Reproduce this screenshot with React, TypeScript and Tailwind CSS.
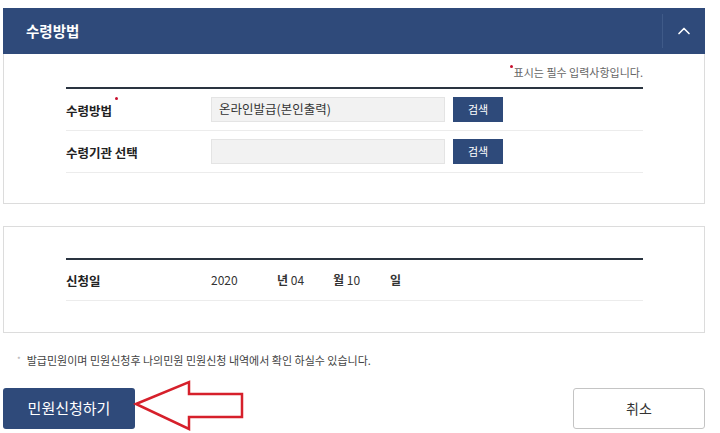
import { ChevronUp } from "lucide-react";

const font = { fontFamily: '"Malgun Gothic", "Noto Sans CJK KR", "Noto Sans", sans-serif' };

function RequiredDot() {
  return <span className="absolute -right-[6px] -top-[4px] h-[3px] w-[3px] rounded-full bg-[#c8102e]" />;
}

function FieldRow({ label, value, required }: { label: string; value?: string; required?: boolean }) {
  return (
    <div className="flex h-[42px] items-center border-b border-[#ececec]">
      <div className="w-[145px] pt-[3px] text-[12.5px] font-bold text-[#222]">
        <span className="relative">
          {label}
          {required && <RequiredDot />}
        </span>
      </div>
      <div className="flex h-[25px] w-[234px] items-center border border-[#e4e4e4] bg-[#f2f2f2] px-[7px] text-[12.5px] text-[#333]">
        {value}
      </div>
      <button className="ml-[8px] h-[25px] w-[50px] bg-[#2e4a7a] text-[11px] text-white">검색</button>
    </div>
  );
}

export default function App() {
  return (
    <div style={font} className="relative h-[433px] w-[720px] overflow-hidden bg-white pl-[3px] pr-[15px] pt-[8px]">
      {/* 수령방법 패널 */}
      <div className="flex h-[46px] items-center bg-[#2f4a7a] pl-[23px]">
        <span className="flex-1 text-[14.5px] font-bold text-white">수령방법</span>
        <div className="h-[34px] w-px bg-[#3f5a88]" />
        <div className="flex w-[42px] items-center justify-center text-white">
          <ChevronUp size={20} strokeWidth={2} />
        </div>
      </div>
      <div className="h-[150px] border-x border-b border-[#dcdcdc] pl-[62px] pr-[61px] pt-[8px]">
        <div className="flex h-[20px] items-center justify-end text-[11px] text-[#666]">
          <span className="relative">
            <span className="absolute -left-[4px] top-[1px] h-[3px] w-[3px] rounded-full bg-[#c8102e]" />
            표시는 필수 입력사항입니다.
          </span>
        </div>
        <div className="mt-[5px] border-t-2 border-[#2a3440]">
          <FieldRow label="수령방법" value="온라인발급(본인출력)" required />
          <FieldRow label="수령기관 선택" />
        </div>
      </div>

      {/* 신청일 패널 */}
      <div className="mt-[22px] h-[107px] border border-[#dcdcdc] pl-[62px] pr-[61px] pt-[31px]">
        <div className="border-t-2 border-[#2a3440]">
          <div className="flex h-[41px] items-center border-b border-[#ececec] text-[12px] text-[#333]">
            <div className="w-[145px] pt-[3px] text-[12.5px] font-bold text-[#222]">신청일</div>
            <span className="w-[66px]">2020</span>
            <span className="w-[56px]">
              <b className="font-bold">년</b> 04
            </span>
            <span className="w-[57px]">
              <b className="font-bold">월</b> 10
            </span>
            <b className="font-bold">일</b>
          </div>
        </div>
      </div>

      <p className="mt-[19px] flex items-center pl-[14px] text-[11px] text-[#444]">
        <span className="mr-[6px] text-[8px] text-[#aaa]">*</span>
        발급민원이며 민원신청후 나의민원 민원신청 내역에서 확인 하실수 있습니다.
      </p>

      <div className="mt-[19px] flex justify-between">
        <button className="h-[41px] w-[132px] rounded-[3px] bg-[#2f4a7a] text-[15px] text-white">민원신청하기</button>
        <button className="h-[41px] w-[132px] rounded-[3px] border border-[#c4c4c4] bg-white text-[14px] text-[#333]">
          취소
        </button>
      </div>

      {/* 빨간 화살표 */}
      <svg className="absolute left-[130px] top-[375px]" width="120" height="60" viewBox="0 0 120 60">
        <polygon
          points="6,29 59,7 59,19 112,19 112,42 59,42 59,54"
          fill="none"
          stroke="#d6202b"
          strokeWidth="2.5"
          strokeLinejoin="miter"
        />
      </svg>
    </div>
  );
}
